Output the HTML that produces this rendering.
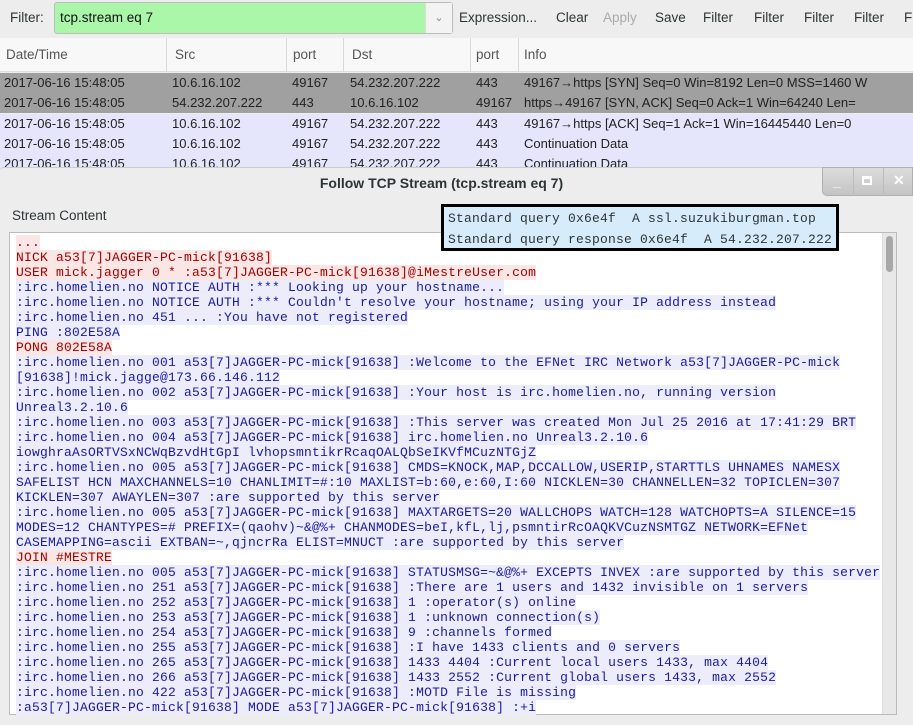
<!DOCTYPE html>
<html><head><meta charset="utf-8"><style>
*{margin:0;padding:0;box-sizing:border-box}
html,body{width:913px;height:725px;overflow:hidden}
body{background:#ededed;font-family:"Liberation Sans",sans-serif;position:relative}
.abs{position:absolute}
.tb{font-size:13.5px;color:#2e3436;top:10px;white-space:nowrap}
.hdr{top:38px;left:0;width:913px;height:34px;background:#f8f8f8;border-bottom:1px solid #ddd}
.hdr span{position:absolute;top:9px;font-size:13.5px;color:#555}
.hdr i{position:absolute;top:0;width:1px;height:34px;background:#d8d8d8}
.row{position:absolute;left:0;width:913px;height:20px;font-size:13px;color:#222;white-space:nowrap}
.row span{position:absolute;top:2px}
.g{background:#a0a0a0}.l{background:#e5e5fb}
.dlg{left:0;top:167px;width:913px;height:558px;background:#ededed;border-top:1px solid #ccc;border-radius:4px 4px 0 0}
.ta{left:9px;top:232px;width:888px;height:483px;background:#fff;border:1px solid #bbb}
.mono{position:absolute;left:16px;top:235px;width:866px;height:480px;overflow:hidden;font-family:"Liberation Mono",monospace;font-size:13px;letter-spacing:0.2px;line-height:15px}
.mono div{height:15px;white-space:pre}
.r span{background:#fbe6e6;color:#a40000}
.b span{background:#ececfa;color:#1a1aa0}
</style></head><body>
<div class="abs tb" style="left:10px">Filter:</div>
<div class="abs" style="left:54px;top:2px;width:399px;height:32px;background:#aaf7aa;border:1px solid #bcbcbc;border-radius:3px"></div>
<div class="abs" style="left:425px;top:3px;width:27px;height:30px;background:#f3f3f3;border-left:1px solid #ddd;color:#888;font-size:11px;text-align:center;line-height:30px">&#8964;</div>
<div class="abs tb" style="left:60px;color:#111">tcp.stream eq 7</div>
<div class="abs tb" style="left:459px">Expression...</div>
<div class="abs tb" style="left:556px">Clear</div>
<div class="abs tb" style="left:603px;color:#aaa">Apply</div>
<div class="abs tb" style="left:655px">Save</div>
<div class="abs tb" style="left:703px">Filter</div>
<div class="abs tb" style="left:754px">Filter</div>
<div class="abs tb" style="left:804px">Filter</div>
<div class="abs tb" style="left:854px">Filter</div>
<div class="abs tb" style="left:904px">F</div>
<div class="abs hdr">
<span style="left:6px">Date/Time</span><i style="left:166px"></i>
<span style="left:175px">Src</span><i style="left:286px"></i>
<span style="left:293px">port</span><i style="left:343px"></i>
<span style="left:352px">Dst</span><i style="left:470px"></i>
<span style="left:476px">port</span><i style="left:518px"></i>
<span style="left:524px">Info</span>
</div>
<div class="row g" style="top:73px"><span style="left:4px">2017-06-16 15:48:05</span><span style="left:172px">10.6.16.102</span><span style="left:292px">49167</span><span style="left:350px">54.232.207.222</span><span style="left:476px">443</span><span style="left:524px">49167→https [SYN] Seq=0 Win=8192 Len=0 MSS=1460 W</span></div>
<div class="row g" style="top:93px"><span style="left:4px">2017-06-16 15:48:05</span><span style="left:172px">54.232.207.222</span><span style="left:292px">443</span><span style="left:350px">10.6.16.102</span><span style="left:476px">49167</span><span style="left:524px">https→49167 [SYN, ACK] Seq=0 Ack=1 Win=64240 Len=</span></div>
<div class="row l" style="top:114px"><span style="left:4px">2017-06-16 15:48:05</span><span style="left:172px">10.6.16.102</span><span style="left:292px">49167</span><span style="left:350px">54.232.207.222</span><span style="left:476px">443</span><span style="left:524px">49167→https [ACK] Seq=1 Ack=1 Win=16445440 Len=0</span></div>
<div class="row l" style="top:134px"><span style="left:4px">2017-06-16 15:48:05</span><span style="left:172px">10.6.16.102</span><span style="left:292px">49167</span><span style="left:350px">54.232.207.222</span><span style="left:476px">443</span><span style="left:524px">Continuation Data</span></div>
<div class="row l" style="top:154px"><span style="left:4px">2017-06-16 15:48:05</span><span style="left:172px">10.6.16.102</span><span style="left:292px">49167</span><span style="left:350px">54.232.207.222</span><span style="left:476px">443</span><span style="left:524px">Continuation Data</span></div>
<div class="abs dlg"></div>
<div class="abs" style="left:0;top:175px;width:913px;text-align:center;font-size:14px;font-weight:bold;color:#2e3436;padding-right:30px">Follow TCP Stream (tcp.stream eq 7)</div>
<div class="abs" style="left:822px;top:167px;width:91px;height:29px;background:linear-gradient(#dcdcdc,#c4c4c4);border-radius:0 0 0 5px;border:1px solid #b0b0b0;color:#fff;font-size:14px;font-weight:bold">
<span class="abs" style="left:10px;top:5px">_</span><span class="abs" style="left:30px;top:0;width:1px;height:28px;background:#bbb"></span>
<span class="abs" style="left:39px;top:8px;width:10px;height:9px;border:2px solid #fff;border-top-width:3px"></span><span class="abs" style="left:60px;top:0;width:1px;height:28px;background:#bbb"></span>
<span class="abs" style="left:70px;top:4px">✕</span></div>
<div class="abs" style="left:12px;top:208px;font-size:13.5px;color:#2e3436">Stream Content</div>
<div class="abs ta"></div>
<div class="abs" style="left:882px;top:233px;width:14px;height:481px;background:#e8e8e8;border-left:1px solid #ddd"></div>
<div class="abs" style="left:886px;top:236px;width:7px;height:36px;background:#a8a8a8;border-radius:4px"></div>
<div class="mono"><div class="r"><span>...</span></div><div class="r"><span>NICK a53[7]JAGGER-PC-mick[91638]</span></div><div class="r"><span>USER mick.jagger 0 * :a53[7]JAGGER-PC-mick[91638]@iMestreUser.com</span></div><div class="b"><span>:irc.homelien.no NOTICE AUTH :*** Looking up your hostname...</span></div><div class="b"><span>:irc.homelien.no NOTICE AUTH :*** Couldn't resolve your hostname; using your IP address instead</span></div><div class="b"><span>:irc.homelien.no 451 ... :You have not registered</span></div><div class="b"><span>PING :802E58A</span></div><div class="r"><span>PONG 802E58A</span></div><div class="b"><span>:irc.homelien.no 001 a53[7]JAGGER-PC-mick[91638] :Welcome to the EFNet IRC Network a53[7]JAGGER-PC-mick</span></div><div class="b"><span>[91638]!mick.jagge@173.66.146.112</span></div><div class="b"><span>:irc.homelien.no 002 a53[7]JAGGER-PC-mick[91638] :Your host is irc.homelien.no, running version</span></div><div class="b"><span>Unreal3.2.10.6</span></div><div class="b"><span>:irc.homelien.no 003 a53[7]JAGGER-PC-mick[91638] :This server was created Mon Jul 25 2016 at 17:41:29 BRT</span></div><div class="b"><span>:irc.homelien.no 004 a53[7]JAGGER-PC-mick[91638] irc.homelien.no Unreal3.2.10.6</span></div><div class="b"><span>iowghraAsORTVSxNCWqBzvdHtGpI lvhopsmntikrRcaqOALQbSeIKVfMCuzNTGjZ</span></div><div class="b"><span>:irc.homelien.no 005 a53[7]JAGGER-PC-mick[91638] CMDS=KNOCK,MAP,DCCALLOW,USERIP,STARTTLS UHNAMES NAMESX</span></div><div class="b"><span>SAFELIST HCN MAXCHANNELS=10 CHANLIMIT=#:10 MAXLIST=b:60,e:60,I:60 NICKLEN=30 CHANNELLEN=32 TOPICLEN=307</span></div><div class="b"><span>KICKLEN=307 AWAYLEN=307 :are supported by this server</span></div><div class="b"><span>:irc.homelien.no 005 a53[7]JAGGER-PC-mick[91638] MAXTARGETS=20 WALLCHOPS WATCH=128 WATCHOPTS=A SILENCE=15</span></div><div class="b"><span>MODES=12 CHANTYPES=# PREFIX=(qaohv)~&amp;@%+ CHANMODES=beI,kfL,lj,psmntirRcOAQKVCuzNSMTGZ NETWORK=EFNet</span></div><div class="b"><span>CASEMAPPING=ascii EXTBAN=~,qjncrRa ELIST=MNUCT :are supported by this server</span></div><div class="r"><span>JOIN #MESTRE</span></div><div class="b"><span>:irc.homelien.no 005 a53[7]JAGGER-PC-mick[91638] STATUSMSG=~&amp;@%+ EXCEPTS INVEX :are supported by this server</span></div><div class="b"><span>:irc.homelien.no 251 a53[7]JAGGER-PC-mick[91638] :There are 1 users and 1432 invisible on 1 servers</span></div><div class="b"><span>:irc.homelien.no 252 a53[7]JAGGER-PC-mick[91638] 1 :operator(s) online</span></div><div class="b"><span>:irc.homelien.no 253 a53[7]JAGGER-PC-mick[91638] 1 :unknown connection(s)</span></div><div class="b"><span>:irc.homelien.no 254 a53[7]JAGGER-PC-mick[91638] 9 :channels formed</span></div><div class="b"><span>:irc.homelien.no 255 a53[7]JAGGER-PC-mick[91638] :I have 1433 clients and 0 servers</span></div><div class="b"><span>:irc.homelien.no 265 a53[7]JAGGER-PC-mick[91638] 1433 4404 :Current local users 1433, max 4404</span></div><div class="b"><span>:irc.homelien.no 266 a53[7]JAGGER-PC-mick[91638] 1433 2552 :Current global users 1433, max 2552</span></div><div class="b"><span>:irc.homelien.no 422 a53[7]JAGGER-PC-mick[91638] :MOTD File is missing</span></div><div class="b"><span>:a53[7]JAGGER-PC-mick[91638] MODE a53[7]JAGGER-PC-mick[91638] :+i</span></div><div class="b"><span>:a53[7]JAGGER-PC-mick[91638]!mick.jagger@173.66.146.112 JOIN :#MESTRE</span></div></div>
<div class="abs" style="left:441px;top:204px;width:398px;height:47px;background:#d6ecfa;border:3px solid #000;font-family:'Liberation Mono',monospace;font-size:13px;letter-spacing:0.2px;color:#2e3436;line-height:21px;padding:1px 0 0 4px;white-space:pre">Standard query 0x6e4f  A ssl.suzukiburgman.top
Standard query response 0x6e4f  A 54.232.207.222</div>
</body></html>
